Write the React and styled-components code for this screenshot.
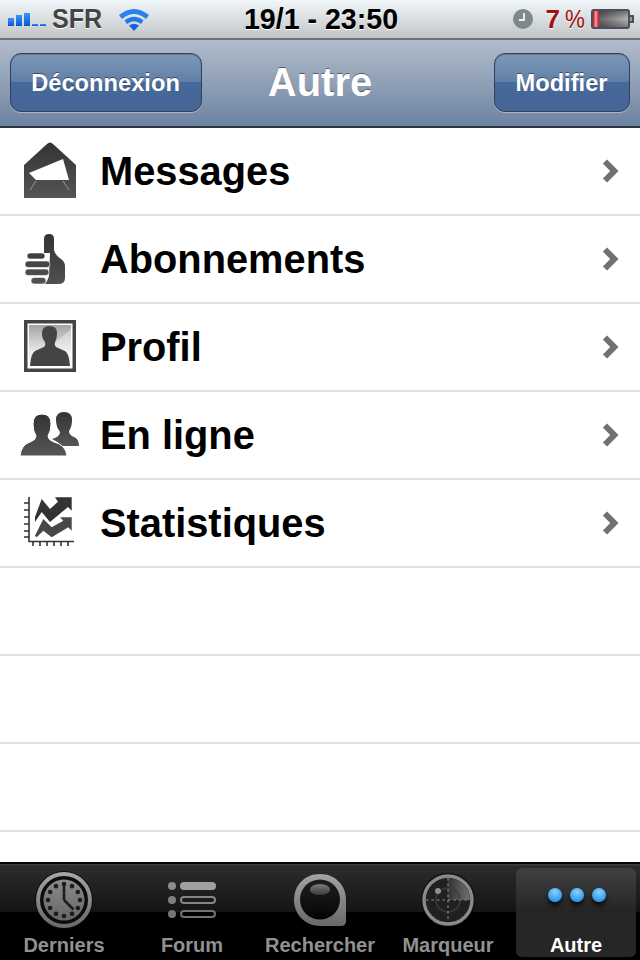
import React from "react";
import styled, { createGlobalStyle } from "styled-components";

const GlobalStyle = createGlobalStyle`
  html, body {
    margin: 0;
    padding: 0;
    background: #ffffff;
  }
`;

const FONT = `"Liberation Sans", Arial, sans-serif`;

const EnvelopeIcon = () => (
  <svg width="54" height="56" viewBox="0 0 54 56">
    <defs>
      <linearGradient id="envFill" x1="0" y1="0" x2="0" y2="1">
        <stop offset="0" stopColor="#333333" />
        <stop offset="1" stopColor="#555555" />
      </linearGradient>
    </defs>
    <path d="M1 23 L24 2 Q27 -1 30 2 L53 23 V56 H1 Z" fill="url(#envFill)" />
    <path d="M6 31 L40 17 L46 38 L40 38 H13 Z" fill="#ffffff" />
    <path d="M13 39 L7 48 M40 39 L46 48" stroke="#9a9a9a" strokeWidth="1" fill="none" />
  </svg>
);

const ThumbIcon = () => (
  <svg width="50" height="52" viewBox="0 -1 50 52">
    <defs>
      <linearGradient id="thumbFill" x1="0" y1="0" x2="0" y2="1">
        <stop offset="0" stopColor="#333333" />
        <stop offset="1" stopColor="#505050" />
      </linearGradient>
    </defs>
    <path
      d="M19 20 L19 6 Q19 1 24 1 Q29 1 29 6 L29 17 Q30 22 36 26 Q40 29 40 33 V45 Q40 51 33 51 H20 Q23 47 24 43 L25 20 Z"
      fill="url(#thumbFill)"
    />
    <rect x="2" y="20" width="18" height="6" rx="3" fill="#3f3f3f" stroke="#ffffff" strokeWidth="0.6" />
    <rect x="0" y="28" width="25" height="6.5" rx="3.2" fill="#464646" stroke="#ffffff" strokeWidth="0.6" />
    <rect x="0" y="36" width="24" height="6.5" rx="3.2" fill="#4b4b4b" stroke="#ffffff" strokeWidth="0.6" />
    <rect x="6" y="44.5" width="15" height="6.5" rx="3.2" fill="#505050" stroke="#ffffff" strokeWidth="0.6" />
  </svg>
);

const ProfileIcon = () => (
  <svg width="52" height="52" viewBox="0 0 52 52">
    <defs>
      <linearGradient id="photoBg" x1="0" y1="0" x2="0" y2="1">
        <stop offset="0" stopColor="#a4a4a4" />
        <stop offset="0.65" stopColor="#ececec" />
        <stop offset="1" stopColor="#ffffff" />
      </linearGradient>
    </defs>
    <rect x="0" y="0" width="52" height="52" fill="#444444" />
    <rect x="3.5" y="3.5" width="45" height="45" fill="#ffffff" />
    <rect x="5" y="5" width="42" height="42" fill="url(#photoBg)" />
    <path d="M47 9 L30 24 L47 47 Z" fill="#ffffff" opacity="0.35" />
    <path
      d="M18 13 Q18 6 25.5 6 Q33 6 33 13 Q33 19 31 22 Q30 25 32 27 L41 31 Q45 33 46 46 H6 Q7 33 11 31 L20 27 Q22 25 21 22 Q18 19 18 13 Z"
      fill="#444444"
    />
  </svg>
);

const PeopleIcon = () => (
  <svg width="62" height="46" viewBox="0 0 62 46">
    <defs>
      <linearGradient id="peopleFill" x1="0" y1="0" x2="0" y2="1">
        <stop offset="0" stopColor="#333333" />
        <stop offset="1" stopColor="#565656" />
      </linearGradient>
    </defs>
    <path
      d="M37 9 Q37 1 45 1 Q53 1 53 9 Q53 16 50 20 Q50 24 55 26 Q60 28 60 35 H43 Q38 30 33 28 Q41 26 41 21 Q37 16 37 9 Z"
      fill="url(#peopleFill)"
    />
    <path
      d="M14 13 Q14 3 23 3 Q32 3 32 13 Q32 20 29 25 Q29 29 35 31 Q47 34 48 45 H1 Q2 34 11 31 Q17 29 17 25 Q14 20 14 13 Z"
      fill="url(#peopleFill)"
      stroke="#ffffff"
      strokeWidth="1"
    />
  </svg>
);

const StatsIcon = () => (
  <svg width="52" height="50" viewBox="0 0 52 50">
    <path d="M5 0 V44.5 H50" stroke="#333333" strokeWidth="1.6" fill="none" />
    <path
      d="M0 6 H5 M0 13 H5 M0 20 H5 M0 27 H5 M0 34 H5 M0 40 H5 M9 44 V49 M16 44 V49 M23 44 V49 M30 44 V49 M37 44 V49 M44 44 V49"
      stroke="#333333"
      strokeWidth="1.6"
      fill="none"
    />
    <path
      d="M11 20 L17.7 2 L26 12 L34 4.7 L31 0.3 H47.7 V13.7 L44 10 L26 25 L17.7 15 L11 25 Z"
      fill="#333333"
    />
    <path
      d="M11 38.7 L19.3 22 L27.7 30.3 L39.3 23.7 L36 20.3 H47.7 V33.7 L44.3 30.3 L27.7 40.3 L19.3 33.7 L12.7 40.3 Z"
      fill="#484848"
    />
  </svg>
);

const ClockIcon = () => (
  <svg width="58" height="58" viewBox="0 0 58 58">
    <defs>
      <linearGradient id="clockRing" x1="0" y1="0" x2="0" y2="1">
        <stop offset="0" stopColor="#a4a4a4" />
        <stop offset="1" stopColor="#6c6c6c" />
      </linearGradient>
      <linearGradient id="clockFace" x1="0" y1="0" x2="0" y2="1">
        <stop offset="0" stopColor="#8a8a8a" />
        <stop offset="1" stopColor="#666666" />
      </linearGradient>
    </defs>
    <circle cx="29" cy="29" r="29" fill="#0c0c0c" />
    <circle cx="29" cy="29" r="26" fill="none" stroke="url(#clockRing)" strokeWidth="4" />
    <circle cx="29" cy="29" r="20.5" fill="url(#clockFace)" />
    {[...Array(12)].map((_, i) => {
      const a = (i * Math.PI) / 6;
      return (
        <circle
          key={i}
          cx={29 + 16 * Math.sin(a)}
          cy={29 - 16 * Math.cos(a)}
          r="2.3"
          fill="#1c1c1c"
        />
      );
    })}
    <path d="M29 29 V12 M29 29 L38.5 38.5" stroke="#1c1c1c" strokeWidth="2.6" fill="none" />
  </svg>
);

const ForumIcon = () => (
  <svg width="50" height="40" viewBox="0 0 50 40">
    <circle cx="5" cy="6" r="4" fill="#8c8c8c" />
    <circle cx="5" cy="20" r="4" fill="#808080" />
    <circle cx="5" cy="34" r="4" fill="#747474" />
    <rect x="13" y="2" width="36" height="8" rx="4" fill="#a0a0a0" />
    <rect x="14" y="17" width="34" height="6" rx="3" fill="none" stroke="#868686" strokeWidth="2" />
    <rect x="14" y="31" width="34" height="6" rx="3" fill="none" stroke="#727272" strokeWidth="2" />
  </svg>
);

const SearchIcon = () => (
  <svg width="54" height="56" viewBox="0 0 54 56">
    <defs>
      <linearGradient id="lensRing" x1="0" y1="0" x2="0" y2="1">
        <stop offset="0" stopColor="#a4a4a4" />
        <stop offset="1" stopColor="#686868" />
      </linearGradient>
      <linearGradient id="lensGlass" x1="0" y1="0" x2="0" y2="1">
        <stop offset="0" stopColor="#1e1e1e" />
        <stop offset="0.7" stopColor="#0e0e0e" />
        <stop offset="1" stopColor="#000000" />
      </linearGradient>
      <linearGradient id="lensShine" x1="0" y1="0" x2="0" y2="1">
        <stop offset="0" stopColor="#7c7c7c" />
        <stop offset="1" stopColor="#3a3a3a" />
      </linearGradient>
    </defs>
    <path
      d="M27 2 C42 2 53 13 53 28 V49 Q53 54 48 54 H27 C12 54 1 42 1 28 C1 13 12 2 27 2 Z"
      fill="url(#lensRing)"
    />
    <circle cx="27" cy="27.5" r="20" fill="url(#lensGlass)" />
    <ellipse cx="27" cy="17.5" rx="10" ry="5.5" fill="url(#lensShine)" />
  </svg>
);

const RadarIcon = () => (
  <svg width="54" height="54" viewBox="0 0 54 54">
    <defs>
      <linearGradient id="radarSweep" x1="0" y1="0" x2="1" y2="0">
        <stop offset="0" stopColor="#333333" />
        <stop offset="1" stopColor="#707070" />
      </linearGradient>
    </defs>
    <circle cx="27" cy="27" r="27" fill="#0c0c0c" />
    <circle cx="27" cy="27" r="24" fill="#202020" stroke="#8a8a8a" strokeWidth="3.4" />
    <path d="M27 27 V5 A22 22 0 0 1 49 27 Z" fill="url(#radarSweep)" />
    <circle cx="27" cy="27" r="12" fill="none" stroke="#3d3d3d" strokeWidth="1.4" />
    <circle cx="17" cy="18" r="3" fill="#8e8e8e" />
    <path d="M27 5 V49 M5 27 H49" stroke="#8c8c8c" strokeWidth="1.2" strokeDasharray="2.5 3" fill="none" />
  </svg>
);

const MENU = [
  { label: "Messages", icon: <EnvelopeIcon /> },
  { label: "Abonnements", icon: <ThumbIcon /> },
  { label: "Profil", icon: <ProfileIcon /> },
  { label: "En ligne", icon: <PeopleIcon /> },
  { label: "Statistiques", icon: <StatsIcon /> },
];

const TABS = [
  { label: "Derniers", icon: <ClockIcon /> },
  { label: "Forum", icon: <ForumIcon /> },
  { label: "Rechercher", icon: <SearchIcon /> },
  { label: "Marqueur", icon: <RadarIcon /> },
];

const App = () => (
  <Screen>
    <GlobalStyle />
    <StatusBar>
      <StatusLeft>
        <Signal>
          <SignalBar $h={8} />
          <SignalBar $h={11} />
          <SignalBar $h={13} />
          <SignalBar $h={2} />
          <SignalBar $h={2} />
        </Signal>
        <Carrier>SFR</Carrier>
        <svg width="32" height="26" viewBox="0 0 32 26">
          <path d="M1 9 Q16 -3 31 9 L28 13 Q16 3 4 13 Z" fill="#2a7ff0" />
          <path d="M6.5 14.5 Q16 7 25.5 14.5 L23 18 Q16 12.5 9 18 Z" fill="#1f78ee" />
          <path d="M11 19.5 Q16 16 21 19.5 L16 25 Z" fill="#0f66dc" />
        </svg>
      </StatusLeft>
      <Clock>19/1 - 23:50</Clock>
      <StatusRight>
        <svg width="20" height="20" viewBox="0 0 20 20">
          <circle cx="10" cy="10" r="10" fill="#7e8a88" />
          <path d="M11 4 V11 H6" stroke="#f4f4f4" strokeWidth="1.8" fill="none" />
        </svg>
        <Percent>
          7<PercentSign>%</PercentSign>
        </Percent>
        <Battery>
          <BatteryLevel />
        </Battery>
        <BatteryTip />
      </StatusRight>
    </StatusBar>
    <NavBar>
      <NavButton $width={192}>Déconnexion</NavButton>
      <NavTitle>Autre</NavTitle>
      <NavButton $width={136} $end>Modifier</NavButton>
    </NavBar>
    <List>
      {MENU.map((item) => (
        <Row key={item.label}>
          <IconSlot>{item.icon}</IconSlot>
          <RowLabel>{item.label}</RowLabel>
          <svg width="20" height="26" viewBox="0 0 20 26">
            <path d="M5 3.5 L14.3 13 L5 22.5" stroke="#717171" strokeWidth="6" fill="none" />
          </svg>
        </Row>
      ))}
      <Row />
      <Row />
      <Row />
    </List>
    <TabBar>
      {TABS.map((tab) => (
        <Tab key={tab.label}>
          <TabIcon>{tab.icon}</TabIcon>
          <TabLabel>{tab.label}</TabLabel>
        </Tab>
      ))}
      <Tab $active>
        <TabIcon>
          <Dots>
            <Dot />
            <Dot />
            <Dot />
          </Dots>
        </TabIcon>
        <TabLabel $active>Autre</TabLabel>
      </Tab>
    </TabBar>
  </Screen>
);

export default App;

// Styled Components
const Screen = styled.div`
  width: 640px;
  height: 960px;
  overflow: hidden;
  display: flex;
  flex-direction: column;
  font-family: ${FONT};
  background: #ffffff;
`;

const StatusBar = styled.div`
  height: 40px;
  flex: none;
  display: grid;
  grid-template-columns: 1fr auto 1fr;
  align-items: center;
  padding: 0 6px 0 8px;
  box-sizing: border-box;
  background: linear-gradient(to bottom, #f1f7fa, #c1c5c7);
  border-bottom: 2px solid #6f7274;
`;

const StatusLeft = styled.div`
  display: flex;
  align-items: center;
`;

const Signal = styled.div`
  display: flex;
  align-items: flex-end;
  gap: 2.5px;
  height: 14px;
  margin-right: 6.5px;
`;

const SignalBar = styled.div`
  width: 5.5px;
  height: ${(p) => p.$h}px;
  background: linear-gradient(to bottom, #3a94f5, #0a55d8);
`;

const Carrier = styled.span`
  font-size: 27px;
  font-weight: 700;
  color: #444444;
  text-shadow: 0 1px 0 #ffffff;
  margin-right: 16px;
  transform: scaleX(0.93);
  transform-origin: left;
  width: 50px;
`;

const Clock = styled.span`
  font-size: 28.6px;
  font-weight: 700;
  color: #000000;
  text-shadow: 0 1px 0 #ffffff;
`;

const StatusRight = styled.div`
  display: flex;
  align-items: center;
  justify-content: flex-end;
`;

const Percent = styled.span`
  font-size: 26px;
  font-weight: 700;
  color: #a01010;
  text-shadow: 0 1px 0 #ffffff;
  margin: 0 6px 0 13px;
  white-space: pre;
`;

const PercentSign = styled.span`
  display: inline-block;
  width: 20px;
  margin-left: 5px;
  font-weight: 400;
  transform: scaleX(0.86);
  transform-origin: left;
`;

const Battery = styled.div`
  width: 39px;
  height: 20px;
  box-sizing: border-box;
  border: 2px solid #4a4f5e;
  border-radius: 3px;
  background: linear-gradient(to bottom, rgba(0, 0, 0, 0.35), rgba(0, 0, 0, 0) 50%, rgba(0, 0, 0, 0.3)),
    linear-gradient(to right, #555555, #b4b4b4);
  display: flex;
`;

const BatteryLevel = styled.div`
  width: 6px;
  background: linear-gradient(to right, #b80c1c, #ff9aa0 45%, #d01020);
`;

const BatteryTip = styled.div`
  width: 4px;
  height: 8px;
  box-sizing: border-box;
  border: 2px solid #4a4f5e;
  border-left: none;
  background: #9a9a9a;
`;

const NavBar = styled.div`
  height: 88px;
  flex: none;
  box-sizing: border-box;
  display: grid;
  grid-template-columns: 1fr auto 1fr;
  align-items: center;
  padding: 0 10px 2px;
  background: linear-gradient(to bottom, #b2bccc, #6d83a1);
  border-bottom: 2px solid #2d3642;
`;

const NavButton = styled.div`
  width: ${(p) => p.$width}px;
  height: 59px;
  justify-self: ${(p) => (p.$end ? "end" : "start")};
  box-sizing: border-box;
  display: flex;
  align-items: center;
  justify-content: center;
  padding: 2px 1px 0 0;
  border: 1px solid #2f435f;
  border-radius: 11px;
  font-size: 23.7px;
  font-weight: 700;
  color: #ffffff;
  text-shadow: 0 -1px 0 rgba(0, 0, 0, 0.45);
  background: linear-gradient(to bottom, #7f98b9 0%, #5f7ea6 50%, #476999 50%, #446595 100%);
  box-shadow: 0 1px 0 rgba(255, 255, 255, 0.35), inset 0 1px 1px rgba(0, 0, 0, 0.2);
`;

const NavTitle = styled.div`
  font-size: 40px;
  font-weight: 700;
  color: #ffffff;
  text-shadow: 0 -1px 0 rgba(0, 0, 0, 0.45);
`;

const List = styled.div`
  flex: 1;
  min-height: 0;
  overflow: hidden;
`;

const Row = styled.div`
  height: 88px;
  box-sizing: border-box;
  display: flex;
  align-items: center;
  padding: 0 20px 0 19px;
  border-bottom: 2px solid #e0e0e0;
  background: #ffffff;
`;

const IconSlot = styled.div`
  width: 62px;
  margin-right: 19px;
  padding-bottom: 2px;
  display: flex;
  justify-content: center;
  align-items: center;
  flex: none;
`;

const RowLabel = styled.div`
  flex: 1;
  font-size: 39.8px;
  font-weight: 700;
  color: #000000;
`;

const TabBar = styled.div`
  height: 98px;
  flex: none;
  box-sizing: border-box;
  display: grid;
  grid-template-columns: repeat(5, 128px);
  align-items: stretch;
  padding: 4px 0 4px;
  border-top: 2px solid #050505;
  background: linear-gradient(to bottom, #434343 0, #2c2c2c 2px, #141414 48px, #000000 48px);
`;

const Tab = styled.div`
  margin: 0 4px;
  display: flex;
  flex-direction: column;
  align-items: center;
  border-radius: 6px;
  background: ${(p) =>
    p.$active
      ? "linear-gradient(to bottom, rgba(255,255,255,0.1), rgba(255,255,255,0.07) 50%, rgba(255,255,255,0.15) 50%)"
      : "transparent"};
`;

const TabIcon = styled.div`
  height: 64px;
  flex: none;
  display: flex;
  align-items: center;
  justify-content: center;
`;

const TabLabel = styled.div`
  margin-top: 2px;
  font-size: 20px;
  font-weight: 700;
  white-space: nowrap;
  color: ${(p) => (p.$active ? "#ffffff" : "#919191")};
`;

const Dots = styled.div`
  display: flex;
  gap: 8px;
  margin: 0 0 10px 2px;
`;

const Dot = styled.div`
  width: 14px;
  height: 14px;
  border-radius: 50%;
  background: radial-gradient(circle at 50% 30%, #8cd0ff, #2f9af0 70%);
  box-shadow: 0 4px 5px rgba(0, 0, 0, 0.75);
`;
